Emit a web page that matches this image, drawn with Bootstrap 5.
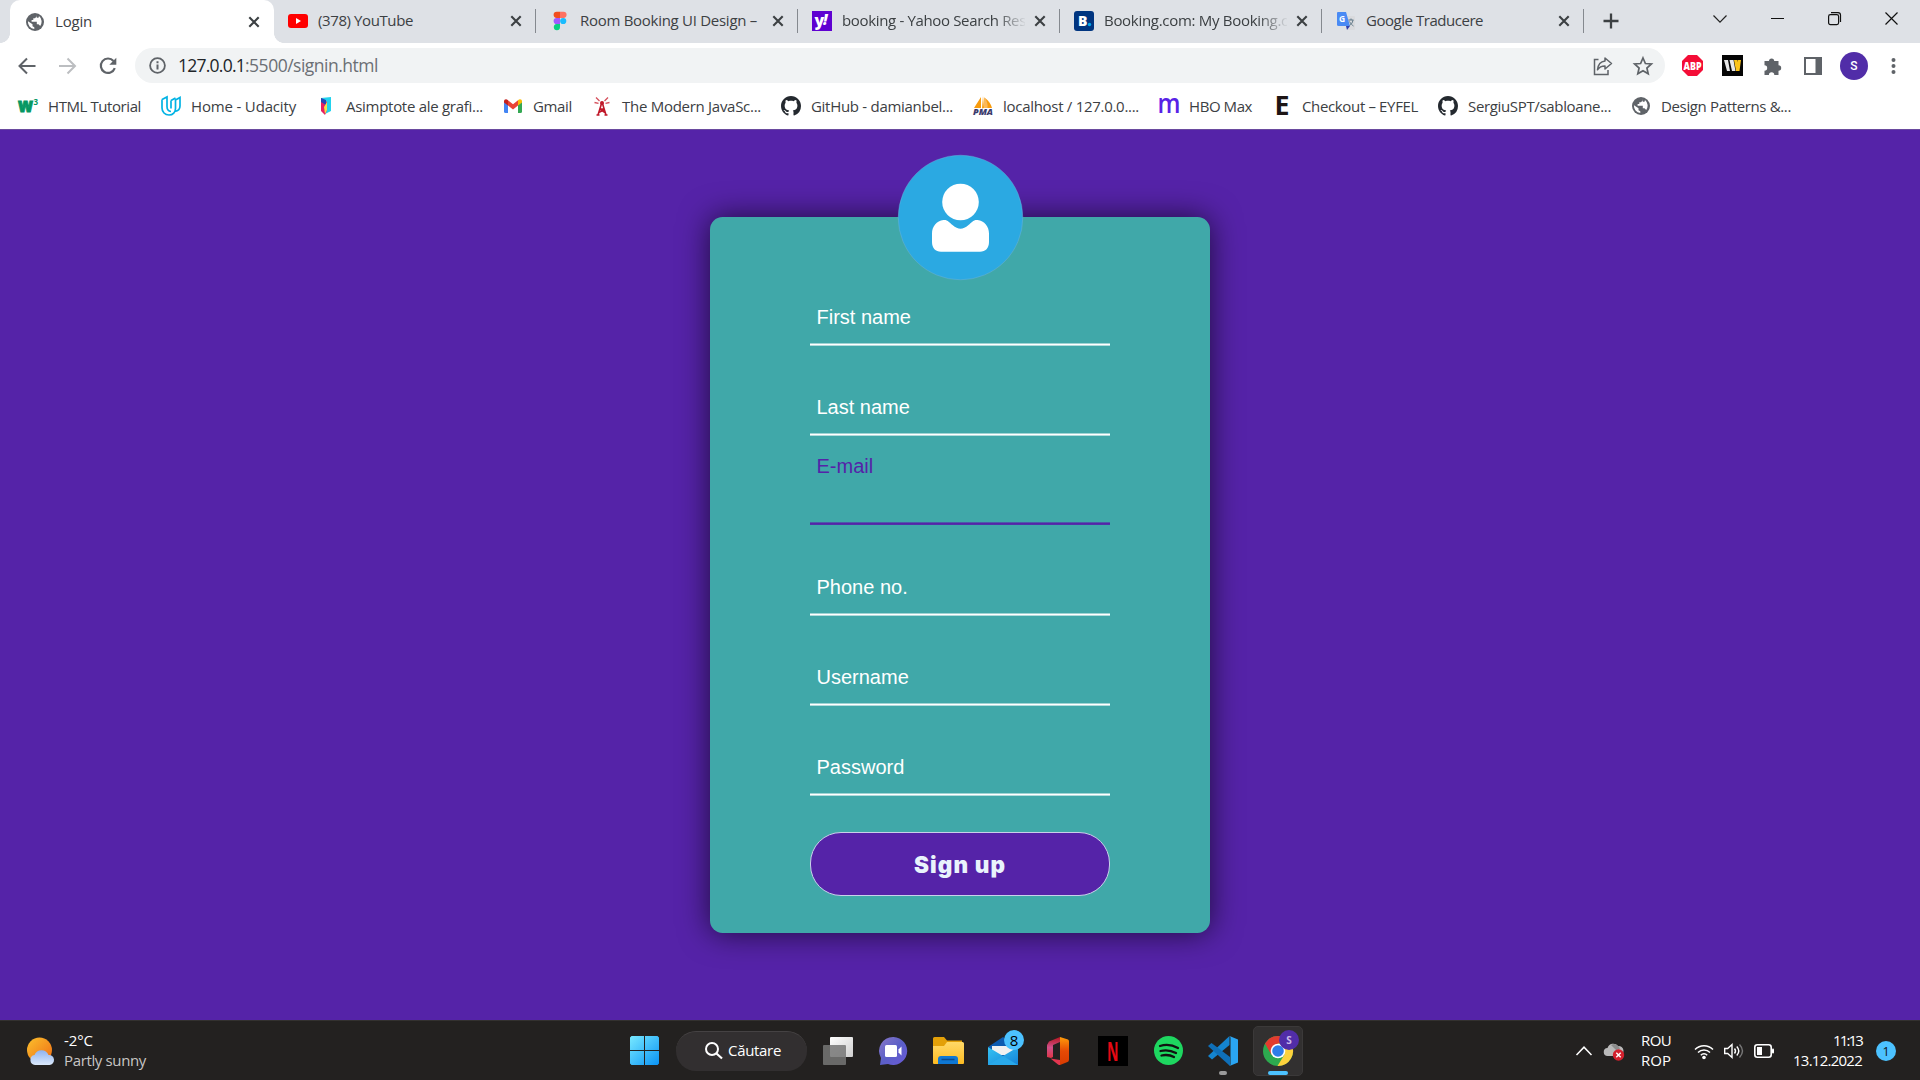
<!DOCTYPE html>
<html lang="ro">
<head>
<meta charset="utf-8">
<title>Login</title>
<link href="https://cdn.jsdelivr.net/npm/bootstrap@5.3.0/dist/css/bootstrap.min.css" rel="stylesheet">
<script src="https://cdn.jsdelivr.net/npm/bootstrap@5.3.0/dist/js/bootstrap.bundle.min.js"></script>
<style>
  body { width:1920px; height:1080px; overflow:hidden; font-family:"Open Sans","Noto Sans",sans-serif; font-size:15px; line-height:20px; color:#3c4043; }
  svg { display:block; flex:none; overflow:visible; }
  .fit { white-space:nowrap; flex:none; }
  .tabstrip { height:43px; background:#dee1e6; padding-left:10px; }
  .tab { width:262px; padding:0 11px 0 14px; border-right:1px solid #85898f; height:24px; margin-top:9px; }
  .tab-on { width:264px; height:43px; margin-top:0; padding:0 12.5px 0 15px; background:#fff; border:0; border-radius:10px 10px 0 0; position:relative; }
  .tab-on::before, .tab-on::after { content:""; position:absolute; bottom:0; width:10px; height:10px; }
  .tab-on::before { left:-10px; background:radial-gradient(circle at 0 0,transparent 9.6px,#fff 10.2px); }
  .tab-on::after { right:-10px; background:radial-gradient(circle at 100% 0,transparent 9.6px,#fff 10.2px); }
  .tab-title { margin-left:10px; width:183px; overflow:hidden; padding-bottom:2px; }
  .tab.fade-end .tab-title { -webkit-mask-image:linear-gradient(90deg,#000 84%,transparent 101%); }
  .tab-on .tab-title { width:150px; }
  .winbtns { margin-left:auto; height:37px; }
  .winbtns > span { width:57.2px; display:flex; justify-content:center; }
  .toolbar { height:45px; background:#fff; padding-left:17px; }
  .omnibox { width:1530px; height:35px; margin-left:17px; border-radius:18px; background:#f1f3f4; font-size:17.5px; padding:0 12px 0 12px; }
  .omnibox .fit { padding-bottom:1px; }
  .bookmarks { height:41px; background:#fff; padding:0 0 5px 18px; gap:20px; }
  .bookmarks > a { display:flex; align-items:center; gap:10px; color:#3c4043; text-decoration:none; }
  .bookmarks .fit { padding-bottom:1px; }
  .viewport { height:891px; background:#5523a8; border-top:1px solid #6a4a9f; padding-top:87px; }
  .signup { position:relative; width:500px; height:715.5px; background:#40a8a9; border-radius:12.500px; padding:81px 100px 0; box-shadow:0 0 31px rgba(0,0,0,.65); font-family:"Liberation Sans",Arial,sans-serif; font-size:20px; }
  .avatar-pic { position:absolute; left:188px; top:-62px; }
  .field { height:90px; padding:0 6.5px; color:#fff; display:flow-root; }
  .field-line { height:3px; margin:0 -6.5px; background:linear-gradient(rgba(255,255,255,.5) 0 1px,#fff 1px 2px,rgba(255,255,255,.6) 2px); }
  .field label { display:block; height:45px; line-height:38px; }
  .field.focused { color:#5523a8; }
  .field.focused label { margin-top:-31px; height:76px; }
  .field.focused .field-line { margin-top:-1px; background:linear-gradient(rgba(85,35,168,.6) 0 1px,#5523a8 1px 2px,rgba(85,35,168,.9) 2px); }
  .btn-signup, .btn-signup:hover { width:300px; height:63.5px; border-radius:31px; background:#5523a8; color:#e9f3fc; border:1px solid #c9d0ea; font:900 22.500px Inter,"Liberation Sans",sans-serif; padding:2px 0 0; margin-top:-6px; }
  .taskbar { height:60px; background:#232120; border-top:1px solid #33312f; color:#fff; }
  .taskbar .fit { position:relative; top:-1px; }
  .side { width:617px; height:59px; }
  .slot { width:55px; height:58px; position:relative; display:flex; align-items:center; justify-content:center; flex:none; }
  .search-pill { width:131px; height:40px; border-radius:20px; background:#322f30; border-top:1px solid #454243; margin:0 3.5px 0 4px; padding-left:29px; flex:none; }
  .slot.running::after { content:""; position:absolute; top:49px; width:8px; height:4px; border-radius:2px; background:#9a9a9a; }
  .slot.active::before { content:""; position:absolute; inset:4px 2.5px 4px 2.5px; border-radius:5px; background:#323030; border:1px solid #3b3939; }
  .slot.active::after { width:20px; background:#4cc2ff; }
  .slot svg { position:relative; }
</style>
</head>
<body>
<svg width="0" height="0" class="position-absolute">
  <defs>
    <symbol id="globe" viewBox="0 0 18 18"><circle cx="9" cy="9" r="9" fill="#5f6368"/><path d="M2 8.200 6.500 11.300v2l1.800 1v1.800A7.200 7.200 0 0 1 2 8.200zM10.400 2v1.700L9 5.300H7.300v1.800H5.600v1.600h5.200v2.500h1.700l1.700 1.700A7.200 7.200 0 0 0 13 3.100l-.5 1.700h-1.700z" fill="#fff"/></symbol>
    <symbol id="cross" viewBox="0 0 16 16"><path d="M3.300 3.300l9.400 9.400M12.700 3.300l-9.400 9.400" stroke="#3c4043" stroke-width="2.100" fill="none"/></symbol>
    <symbol id="octo" viewBox="0 0 16 16"><path fill="#24292f" d="M8 0C3.580 0 0 3.580 0 8c0 3.540 2.290 6.530 5.470 7.590.4.070.55-.17.55-.38 0-.19-.01-.82-.01-1.490-2.010.37-2.530-.49-2.690-.94-.09-.23-.48-.94-.82-1.130-.28-.15-.68-.52-.01-.53.63-.01 1.080.58 1.230.82.72 1.210 1.870.87 2.330.66.07-.52.28-.87.51-1.070-1.780-.2-3.640-.89-3.640-3.950 0-.87.31-1.590.82-2.150-.08-.2-.36-1.020.08-2.120 0 0 .67-.21 2.200.82.64-.18 1.320-.27 2-.27s1.360.09 2 .27c1.530-1.040 2.200-.82 2.200-.82.44 1.100.16 1.920.08 2.120.51.56.82 1.270.82 2.150 0 3.070-1.870 3.750-3.650 3.950.29.25.54.73.54 1.480 0 1.070-.01 1.930-.01 2.200 0 .21.15.46.55.38A8.010 8.010 0 0 0 16 8c0-4.420-3.580-8-8-8z"/></symbol>
    <linearGradient id="win" x1="0" y1="0" x2="1" y2="1"><stop offset="0" stop-color="#78e9ff"/><stop offset="1" stop-color="#0a93f5"/></linearGradient>
    <linearGradient id="chat" x1="0" y1="0" x2="1" y2="1"><stop offset="0" stop-color="#8a78c8"/><stop offset=".5" stop-color="#5b5fc7"/><stop offset="1" stop-color="#6b5ad8"/></linearGradient>
    <linearGradient id="fold" x1="0" y1="0" x2="0" y2="1"><stop offset="0" stop-color="#ffd968"/><stop offset="1" stop-color="#fdbb22"/></linearGradient>
    <linearGradient id="mailg" x1="0" y1="0" x2="1" y2="1"><stop offset="0" stop-color="#35c3f3"/><stop offset="1" stop-color="#1583d8"/></linearGradient>
    <linearGradient id="sun" x1="0" y1="0" x2="1" y2="1"><stop offset="0" stop-color="#fbc02d"/><stop offset="1" stop-color="#ee6c14"/></linearGradient>
    <linearGradient id="cloud" x1="0" y1="0" x2="0" y2="1"><stop offset="0" stop-color="#8fb3ee"/><stop offset="1" stop-color="#dbe9fb"/></linearGradient>
    <linearGradient id="off" x1="0" y1="0" x2="0" y2="1"><stop offset="0" stop-color="#b3151e"/><stop offset=".5" stop-color="#d0508a"/><stop offset="1" stop-color="#e03545"/></linearGradient>
    <linearGradient id="off2" x1="0" y1="0" x2="0" y2="1"><stop offset="0" stop-color="#ff9c0a"/><stop offset=".5" stop-color="#e64a05"/><stop offset="1" stop-color="#d83b01"/></linearGradient>
    <linearGradient id="tv" x1="0" y1="0" x2="1" y2="1"><stop offset="0" stop-color="#fff"/><stop offset="1" stop-color="#cfcfcf"/></linearGradient>
  </defs>
</svg>

<header>
  <div class="tabstrip d-flex">
    <div class="tab tab-on d-flex align-items-center">
      <svg width="20" height="20"><use href="#globe" x="1" y="1" width="18" height="18"/></svg>
      <div class="tab-title"><span class="fit d-inline-block" data-w="37">Login</span></div>
      <svg class="ms-auto" width="16" height="16"><use href="#cross"/></svg>
    </div>
    <div class="tab d-flex align-items-center">
      <svg width="20" height="20"><rect y="3" width="20" height="14" rx="3" fill="#f00"/><path d="M8 7l5 3-5 3z" fill="#fff"/></svg>
      <div class="tab-title"><span class="fit d-inline-block" data-w="95">(378) YouTube</span></div>
      <svg class="ms-auto" width="16" height="16"><use href="#cross"/></svg>
    </div>
    <div class="tab d-flex align-items-center">
      <svg width="20" height="20"><path d="M10 .700H6.700a3 3 0 0 0 0 6.200H10z" fill="#f24e1e"/><path d="M10 .700h3.500a3.100 3.100 0 0 1 0 6.200H10z" fill="#ff7262"/><path d="M10 6.900H6.700a3.100 3.100 0 0 0 0 6.200H10z" fill="#a259ff"/><circle cx="13.200" cy="10" r="3.100" fill="#1abcfe"/><path d="M10 13.100H6.700a3.100 3.100 0 1 0 3.300 3.100z" fill="#0acf83"/></svg>
      <div class="tab-title"><span class="fit d-inline-block" data-w="177">Room Booking UI Design –</span></div>
      <svg class="ms-auto" width="16" height="16"><use href="#cross"/></svg>
    </div>
    <div class="tab fade-end d-flex align-items-center">
      <svg width="20" height="20"><rect width="20" height="20" fill="#5f01d1"/><text x="2.500" y="15" font-size="16" font-weight="800" fill="#fff" textLength="9">y</text><text x="11" y="14" font-size="15" font-weight="800" font-style="italic" fill="#fff">!</text></svg>
      <div class="tab-title"><span class="fit d-inline-block" data-w="184">booking - Yahoo Search Res</span></div>
      <svg class="ms-auto" width="16" height="16"><use href="#cross"/></svg>
    </div>
    <div class="tab fade-end d-flex align-items-center">
      <svg width="20" height="20"><rect width="20" height="20" rx="3" fill="#003580"/><text x="4" y="15" font-size="14" font-weight="800" fill="#fff">B</text><circle cx="15.500" cy="13.500" r="1.700" fill="#00a7ec"/></svg>
      <div class="tab-title"><span class="fit d-inline-block" data-w="184">Booking.com: My Booking.c</span></div>
      <svg class="ms-auto" width="16" height="16"><use href="#cross"/></svg>
    </div>
    <div class="tab d-flex align-items-center">
      <svg width="20" height="20"><path d="M9 5h9a1 1 0 0 1 1 1v12a1 1 0 0 1-1 1h-6z" fill="#d9dadd"/><path d="M2 1h8l4 14H2.500A1.500 1.500 0 0 1 1 13.500V2a1 1 0 0 1 1-1z" fill="#4a8af4"/><path d="M10 15h4l-3 4z" fill="#2f3fae"/><text x="3" y="11" font-size="8.500" font-weight="700" fill="#fff">G</text><path d="M12.500 9h5M15 7.500V9M17 9c-.5 3-2 4.500-3.500 5.500M13.500 10.500c1 2 2.500 3.500 4 4.500" stroke="#607988" stroke-width="1" fill="none"/></svg>
      <div class="tab-title"><span class="fit d-inline-block" data-w="117">Google Traducere</span></div>
      <svg class="ms-auto" width="16" height="16"><use href="#cross"/></svg>
    </div>
    <svg class="mt-1" style="margin-left:19px" width="16" height="35"><path d="M.500 17h15M8 9.500v15" stroke="#3c4043" stroke-width="2.300"/></svg>
    <div class="winbtns d-flex align-items-center">
      <span><svg width="14" height="8"><path d="M.500.500L7 7.200 13.500.500" fill="none" stroke="#222" stroke-width="1.200"/></svg></span>
      <span><svg width="13" height="2"><path d="M0 .500h13" stroke="#111" stroke-width="1"/></svg></span>
      <span><svg width="13" height="13"><rect x=".600" y="2.600" width="10" height="10" rx="1.800" fill="none" stroke="#111" stroke-width="1.200"/><path d="M3 .600h7a2.500 2.500 0 0 1 2.500 2.500V10" fill="none" stroke="#111" stroke-width="1.200"/></svg></span>
      <span><svg width="13" height="13"><path d="M.500.500l12 12M12.500.500l-12 12" stroke="#111" stroke-width="1.200"/></svg></span>
    </div>
  </div>

  <div class="toolbar d-flex align-items-center">
    <svg width="20" height="20"><path d="M18.500 10H3M10 2.500L2.500 10l7.500 7.500" fill="none" stroke="#5f6368" stroke-width="2"/></svg>
    <svg style="margin-left:20px" width="20" height="20"><path d="M2 10h15.500M10.500 2.500L18 10l-7.500 7.500" fill="none" stroke="#bcbec1" stroke-width="2"/></svg>
    <svg style="margin-left:21px" width="20" height="20"><path d="M16.800 12.200A7.200 7.200 0 1 1 15.500 5" fill="none" stroke="#5f6368" stroke-width="2.200"/><path d="M18.300 1.800v7h-7z" fill="#5f6368"/></svg>
    <div class="omnibox d-flex align-items-center">
      <svg style="margin-left:2px" width="17" height="17"><circle cx="8.500" cy="8.500" r="7.400" fill="none" stroke="#5f6368" stroke-width="1.800"/><path d="M8.500 7.500v5M8.500 4.200v2" stroke="#5f6368" stroke-width="2"/></svg>
      <span class="fit text-dark" data-w="67" style="margin-left:12px">127.0.0.1</span><span class="fit" data-w="133" style="color:#6b6f74">:5500/signin.html</span>
      <svg class="ms-auto" width="20" height="20"><path d="M5.500 3.500H1.500v15H15V14" fill="none" stroke="#5f6368" stroke-width="1.500"/><path d="M12 2l6.500 5.500L12 13v-3c-4 0-6 1.500-7.500 3.800C5 9 7.500 5.500 12 5z" fill="none" stroke="#5f6368" stroke-width="1.500" stroke-linejoin="round"/></svg>
      <svg style="margin-left:20px" width="20" height="20"><path d="M10 2l2.400 5.500 6 .500-4.500 4 1.300 5.800L10 14.700l-5.200 3.100L6.100 12 1.600 8l6-.500z" fill="none" stroke="#5f6368" stroke-width="1.700"/></svg>
    </div>
    <svg style="margin-left:17px" width="21" height="21"><path d="M6 0h9l6 6v9l-6 6H6l-6-6V6z" fill="#f40d37"/><text x="1.500" y="14.500" font-size="10.500" font-weight="800" fill="#fff" textLength="18" lengthAdjust="spacingAndGlyphs">ABP</text></svg>
    <svg style="margin-left:19px" width="21" height="21"><rect width="21" height="21" fill="#050505"/><path d="M2 5h4l2 11H5zM7.500 5h4l2 11H10z" fill="#e7e7e7"/><path d="M12 5h3l2 11h-3zM15.500 5H19l-1.500 11H15z" fill="#fcc419"/></svg>
    <svg style="margin-left:20px" width="20" height="20"><path d="M1.500 5H6a2.600 2.600 0 0 1 5.200 0H15.500v4.300a2.700 2.700 0 0 1 0 5.400V19H11.300a2.700 2.700 0 0 0-5.400 0H1.500v-4.300a2.700 2.700 0 0 0 0-5.400z" fill="#5f6368"/></svg>
    <svg style="margin-left:21px" width="18" height="18"><rect x="1" y="1" width="16" height="16" fill="none" stroke="#5f6368" stroke-width="2"/><rect x="11.500" y="1" width="6" height="16" fill="#5f6368"/></svg>
    <svg style="margin-left:18px" width="28" height="28"><circle cx="14" cy="14" r="14" fill="#512da8"/><text x="14" y="18" font-size="12" font-family="Roboto,sans-serif" font-weight="500" text-anchor="middle" fill="#fff">S</text></svg>
    <svg style="margin-left:23px" width="5" height="18"><g fill="#5f6368"><circle cx="2.500" cy="3" r="2"/><circle cx="2.500" cy="9" r="2"/><circle cx="2.500" cy="15" r="2"/></g></svg>
  </div>

  <nav class="bookmarks d-flex">
    <a href="#"><svg width="20" height="20"><text x="0" y="15.500" font-size="20" font-weight="800" fill="#059862" stroke="#059862" stroke-width="1" textLength="15" lengthAdjust="spacingAndGlyphs">w</text><text x="15.500" y="9" font-size="8" font-weight="700" fill="#059862">3</text></svg><span class="fit" data-w="93">HTML Tutorial</span></a>
    <a href="#"><svg width="20" height="20"><path d="M1 3.500L6 1v9.500c0 3 1.500 4.700 4 5M1 3.500V12c0 4 3 7 7 7s6.500-3 6.500-6.500V4L19 1.500V10c0 3-2 5-5 5.300M10 4.500L14.500 2M10 4.500v8" fill="none" stroke="#02b3e4" stroke-width="1.700"/></svg><span class="fit" data-w="105">Home - Udacity</span></a>
    <a href="#"><svg width="20" height="20"><path d="M5 2l10-1v14l-6 3z" fill="#22d3ee"/><path d="M5 2l6 4v8l-2 5-4-4z" fill="#e91e63"/><path d="M5 2l5 2v5L5 6z" fill="#2447b8"/><path d="M8 11l3-5v8l-2 4z" fill="#f4e24a"/></svg><span class="fit" data-w="137">Asimptote ale grafi...</span></a>
    <a href="#"><svg width="20" height="20"><path d="M1 5v10.500A1.500 1.500 0 0 0 2.500 17H5V8z" fill="#4285f4"/><path d="M15 8v9h2.500a1.500 1.500 0 0 0 1.500-1.500V5z" fill="#34a853"/><path d="M5 4.300l5 4 5-4V9.500l-5 4-5-4z" fill="#ea4335"/><path d="M1 5.500C1 3 3.500 2.500 5 4.300V9.500L1 6.500z" fill="#c5221f"/><path d="M19 5.500c0-2.500-2.500-3-4-1.200V9.500l4-3z" fill="#fbbc04"/></svg><span class="fit" data-w="39">Gmail</span></a>
    <a href="#"><svg width="20" height="20"><path d="M10 6L6 19M10 6l4 13M7.500 13h5M6.700 16.500l6 -3M7.500 13l5.500 3.500M4.500 19H7.500M12.500 19h3" stroke="#c01829" stroke-width="1.600" fill="none"/><circle cx="10" cy="7" r="2" fill="#c01829"/><path d="M2.500 6.500l4 .800M4 1.500l3.500 3.500M17.500 6.500l-4 .800M16 1.500L12.500 5" stroke="#d5505c" stroke-width="1.300"/></svg><span class="fit" data-w="139">The Modern JavaSc...</span></a>
    <a href="#"><svg width="20" height="20"><use href="#octo"/></svg><span class="fit" data-w="142">GitHub - damianbel...</span></a>
    <a href="#"><svg width="20" height="20"><path d="M8 1v11H1zM10 0l1 12-2 .500zM12 2c4 3 6 6 7 10h-6z" fill="#f89c0e"/><path d="M11 1c3 3 4 7 3.500 11H11z" fill="#fbb95a"/><text x="0" y="19" font-size="8" font-weight="800" font-style="italic" fill="#3b3b6d" textLength="20" lengthAdjust="spacingAndGlyphs">PMA</text></svg><span class="fit" data-w="136">localhost / 127.0.0....</span></a>
    <a href="#"><svg width="20" height="20"><text x="-1.500" y="17" font-size="27" font-weight="600" fill="#5822e6" textLength="23" lengthAdjust="spacingAndGlyphs">m</text></svg><span class="fit" data-w="63">HBO Max</span></a>
    <a href="#"><svg width="20" height="20"><text x="2.500" y="19.300" font-size="26" font-weight="700" fill="#1d1515" textLength="15" lengthAdjust="spacingAndGlyphs">E</text></svg><span class="fit" data-w="116">Checkout – EYFEL</span></a>
    <a href="#"><svg width="20" height="20"><use href="#octo"/></svg><span class="fit" data-w="143">SergiuSPT/sabloane...</span></a>
    <a href="#"><svg width="20" height="20"><use href="#globe" x="1" y="1" width="18" height="18"/></svg><span class="fit" data-w="130">Design Patterns &amp;...</span></a>
  </nav>
</header>

<main class="viewport d-flex justify-content-center align-items-start">
  <form class="signup">
    <svg class="avatar-pic" width="125" height="125"><circle cx="62.500" cy="62.500" r="62.300" fill="#2ba9e2" stroke="#7cb4d8" stroke-width=".400"/><circle cx="62.500" cy="47" r="18.300" fill="#fff"/><path d="M45.500 65c4-.500 6 2.500 9 5 6 5 10 5 16 0 3-2.500 5-5.500 9-5 7 1 11.500 6.500 11.500 13.500V87c0 6-3.500 9.800-9 9.800H43c-5.500 0-9-3.800-9-9.800v-8.500c0-7 4.500-12.500 11.500-13.500z" fill="#fff"/></svg>
    <div class="field"><label>First name</label><div class="field-line"></div></div>
    <div class="field"><label>Last name</label><div class="field-line"></div></div>
    <div class="field focused"><label>E-mail</label><div class="field-line"></div></div>
    <div class="field"><label>Phone no.</label><div class="field-line"></div></div>
    <div class="field"><label>Username</label><div class="field-line"></div></div>
    <div class="field"><label>Password</label><div class="field-line"></div></div>
    <button type="button" class="btn btn-signup"><span class="fit d-inline-block" data-w="92">Sign up</span></button>
  </form>
</main>

<footer class="taskbar d-flex align-items-center">
  <div class="side d-flex align-items-center">
    <svg style="margin-left:27px" width="28" height="28"><circle cx="12.500" cy="13" r="12.500" fill="url(#sun)"/><path d="M8 28a5 5 0 0 1-.500-9.900 7.500 7.500 0 0 1 14-.100A5 5 0 0 1 22.500 28z" fill="url(#cloud)"/></svg>
    <div style="margin-left:9px"><div class="fit" data-w="29">-2°C</div><div class="fit" data-w="82" style="color:#c8c6c5">Partly sunny</div></div>
  </div>
  <div class="slot"><svg width="29" height="29"><path d="M1.500 0H14v14H0V1.500zM15 0h12.500L29 1.500V14H15zM0 15h14v14H1.500L0 27.500zM15 15h14v12.500L27.500 29H15z" fill="url(#win)"/></svg></div>
  <div class="search-pill d-flex align-items-center"><svg width="18" height="18"><circle cx="7" cy="7" r="6" fill="none" stroke="#fff" stroke-width="2"/><path d="M11.500 11.500l5.500 5" stroke="#fff" stroke-width="2.200"/></svg><span class="fit" data-w="53" style="margin-left:5px">Căutare</span></div>
  <div class="slot"><svg width="30" height="28"><rect x="7" y="0" width="23" height="20" rx="1" fill="url(#tv)"/><rect x="0" y="8" width="23" height="20" rx="1" fill="#757575" opacity=".85"/></svg></div>
  <div class="slot"><svg width="29" height="28"><path d="M14.500 0A14 14 0 1 1 9 27L1 28l1-7A14 14 0 0 1 14.500 0z" fill="url(#chat)"/><rect x="6" y="8" width="12" height="12" rx="1.500" fill="#fff"/><path d="M19.500 12.500l3-3v9l-3-3z" fill="#fff"/></svg></div>
  <div class="slot"><svg width="31" height="27"><path d="M0 1.500Q0 0 1.500 0H11l3 3.500h15V12H0z" fill="#e3a008"/><path d="M0 9h11l3-4h15.500Q31 5 31 6.500V26q0 1-1 1H1q-1 0-1-1z" fill="url(#fold)"/><path d="M5 27v-5q0-3 3-3h14q3 0 3 3v5z" fill="#0f78d4"/><path d="M8.500 22.500h13" stroke="#0a4a8f" stroke-width="1.500"/></svg></div>
  <div class="slot"><svg width="30" height="28"><path d="M0 10L15 0l15 10-15 10z" fill="#0d5bb0"/><path d="M4 9h22v9H4z" fill="#f1f1f1"/><path d="M0 10l15 9 15-9v18H0z" fill="url(#mailg)"/><path d="M0 28l15-9 15 9z" fill="#29a9ea"/><circle cx="26" cy="3" r="10" fill="#4cc2ff"/><text x="26" y="8.500" font-size="15" text-anchor="middle" fill="#000">8</text></svg></div>
  <div class="slot"><svg width="22" height="28"><path d="M13 0L2 4.500 0 8v12l4 1 2-1V8l7-3z" fill="url(#off)"/><path d="M13 0l8 2.500Q22 3 22 4.500v18q0 2-1.500 2.500L13 28z" fill="url(#off2)"/><path d="M3.500 21.500l9.500 1.500v5q-1 0-2-.500z" fill="#e33650"/></svg></div>
  <div class="slot"><svg width="30" height="30"><rect width="30" height="30" fill="#000"/><text x="9" y="24.500" font-size="26" font-weight="700" fill="#e50914" textLength="11.500" lengthAdjust="spacingAndGlyphs">N</text></svg></div>
  <div class="slot"><svg width="29" height="29"><circle cx="14.500" cy="14.500" r="14.500" fill="#1ed760"/><path d="M6 10q9-3 18 2M6.500 15q8-2 15.500 2M7.500 19.500q7-1.500 12.500 1.500" fill="none" stroke="#111" stroke-width="2.300" stroke-linecap="round"/></svg></div>
  <div class="slot running"><svg width="30" height="30"><path d="M21.500 0v9L4 23.500 0 20z" fill="#1484cf"/><path d="M0 10l3.500-3L22 21v9z" fill="#0f6fb8"/><path d="M21.500 0L30 3.500v23L21.500 30q1-.5 1-2V2q0-1.500-1-2z" fill="#2aa5f2"/></svg></div>
  <div class="slot running active"><svg width="30" height="30"><circle cx="15" cy="15" r="15" fill="#2da94f"/><path d="M2 7.500A15 15 0 0 1 28 7.500H15L8.500 19z" fill="#e33b2e"/><path d="M28 7.500A15 15 0 0 1 14.500 30l7-11.500L15 7.500z" fill="#fdd23c"/><circle cx="15" cy="15" r="7.300" fill="#fff"/><circle cx="15" cy="15" r="5.800" fill="#2f7de9"/><circle cx="26" cy="4" r="10" fill="#512da8"/><text x="26" y="8" font-size="10" font-weight="700" text-anchor="middle" fill="#c9b8e8">S</text></svg></div>
  <div class="d-flex align-items-center ms-auto" style="padding-right:24px">
    <svg width="16" height="10"><path d="M.500 9L8 1.200 15.500 9" fill="none" stroke="#fff" stroke-width="1.500"/></svg>
    <svg style="margin-left:12px" width="20" height="18"><path d="M4 14A4 4 0 0 1 3.500 6 6 6 0 0 1 14 4a5 5 0 0 1 1 10z" fill="#b9b9b9"/><path d="M7 3a6 6 0 0 1 9 4l-4 1z" fill="#8c8c8c"/><circle cx="14.500" cy="13" r="5.700" fill="#d3202d"/><path d="M12.300 10.800l4.400 4.400M16.700 10.800l-4.400 4.400" stroke="#fff" stroke-width="1.400"/></svg>
    <div class="text-center" style="margin-left:17px;margin-right:1px"><div class="fit" data-w="30">ROU</div><div class="fit" data-w="30">ROP</div></div>
    <svg style="margin-left:22px" width="20" height="16"><path d="M1 6.500a12.700 12.700 0 0 1 18 0M4 9.500a8.500 8.500 0 0 1 12 0M6.800 12.200a4.500 4.500 0 0 1 6.400 0" fill="none" stroke="#fff" stroke-width="1.500"/><circle cx="10" cy="14.500" r="1.800" fill="#fff"/></svg>
    <svg style="margin-left:10px" width="20" height="16"><path d="M.700 5.500h3L8 1.500v13L3.700 10.500h-3z" fill="none" stroke="#fff" stroke-width="1.400"/><path d="M10.500 5.500q2 2.500 0 5M12.800 3.500q4 4.500 0 9" fill="none" stroke="#fff" stroke-width="1.400"/><path d="M15.500 1.500q6 6.500 0 13" fill="none" stroke="#777" stroke-width="1.400"/></svg>
    <svg style="margin-left:10px" width="20" height="14"><rect x=".800" y=".800" width="16.400" height="12.400" rx="2.500" fill="none" stroke="#fff" stroke-width="1.600"/><rect x="3" y="3" width="5" height="8" fill="#fff"/><rect x="18" y="4.500" width="2" height="5" rx="1" fill="#fff"/></svg>
    <div class="d-flex flex-column align-items-end" style="margin-left:19px"><div class="fit" data-w="29">11:13</div><div class="fit" data-w="69">13.12.2022</div></div>
    <svg style="margin-left:14px" width="20" height="20"><circle cx="10" cy="10" r="10" fill="#4cc2ff"/><text x="10" y="14.500" font-size="12.500" text-anchor="middle" fill="#111">1</text></svg>
  </div>
</footer>
<script>
  document.querySelectorAll('.fit[data-w]').forEach(function (el) {
    var w = +el.dataset.w, r = document.createRange();
    r.selectNodeContents(el);
    var n = el.textContent.length;
    el.style.letterSpacing = ((w - r.getBoundingClientRect().width) / n).toFixed(3) + 'px';
    if (getComputedStyle(el).display !== 'inline') el.style.width = w + 'px';
  });
</script>
</body>
</html>
